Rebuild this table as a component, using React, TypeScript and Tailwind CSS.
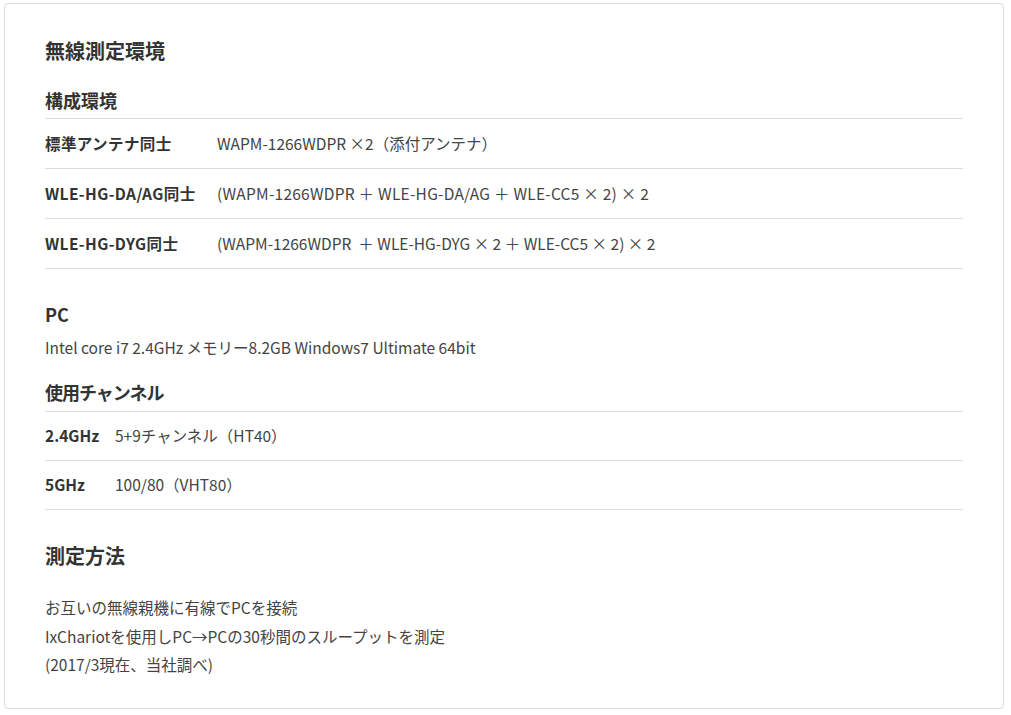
const font = { fontFamily: '"Noto Sans CJK JP", "Noto Sans", sans-serif' };

const antennaRows = [
  { label: "標準アンテナ同士", value: "WAPM-1266WDPR ×2（添付アンテナ）", wide: false },
  { label: "WLE-HG-DA/AG同士", value: "(WAPM-1266WDPR ＋ WLE-HG-DA/AG ＋ WLE-CC5 × 2) × 2", wide: true },
  { label: "WLE-HG-DYG同士", value: "(WAPM-1266WDPR  ＋ WLE-HG-DYG × 2 ＋ WLE-CC5 × 2) × 2", wide: false },
];

const channelRows = [
  { label: "2.4GHz", value: "5+9チャンネル（HT40）" },
  { label: "5GHz", value: "100/80（VHT80）" },
];

export default function App() {
  return (
    <div className="min-h-[715px] bg-white pl-[4px] pt-[3px] text-[#333]" style={font}>
      <div className="w-[1000px] h-[706px] border border-[#dcdcdc] rounded-[4px] px-[40px] pt-[32px]">
        {/* 無線測定環境 */}
        <h2 className="text-[20px] leading-[30px] font-bold text-[#333]">無線測定環境</h2>

        <h3 className="mt-[21px] pb-[4px] text-[18px] leading-[27px] font-bold">構成環境</h3>
        <table className="w-full border-collapse text-[15.5px]">
          <tbody>
            {antennaRows.map((r) => (
              <tr key={r.label} className="h-[50px] border-t border-b border-[#dcdcdc]">
                <th className="w-[172px] text-left font-bold align-middle p-0 tracking-[0.4px]">{r.label}</th>
                <td className={`align-middle p-0 text-[#444] whitespace-pre ${r.wide ? "tracking-[0.25px]" : ""}`}>
                  {r.value}
                </td>
              </tr>
            ))}
          </tbody>
        </table>

        {/* PC */}
        <h3 className="mt-[32px] text-[18px] leading-[27px] font-bold">PC</h3>
        <p className="mt-[7px] text-[15.5px] leading-[24px] text-[#444]">
          Intel core i7 2.4GHz メモリー8.2GB Windows7 Ultimate 64bit
        </p>

        <h3 className="mt-[20px] pb-[5px] text-[18px] leading-[27px] font-bold tracking-[-1px]">使用チャンネル</h3>
        <table className="w-full border-collapse text-[15.5px]">
          <tbody>
            {channelRows.map((r) => (
              <tr key={r.label} className="h-[49px] border-t border-b border-[#dcdcdc]">
                <th className="w-[70px] text-left font-bold align-middle p-0">{r.label}</th>
                <td className="align-middle p-0 text-[#444]">{r.value}</td>
              </tr>
            ))}
          </tbody>
        </table>

        {/* 測定方法 */}
        <h2 className="mt-[31px] text-[20px] leading-[30px] font-bold">測定方法</h2>
        <div className="mt-[22px] text-[15.5px] leading-[28.5px] text-[#444]">
          <p>お互いの無線親機に有線でPCを接続</p>
          <p>IxChariotを使用しPC→PCの30秒間のスループットを測定</p>
          <p>(2017/3現在、当社調べ)</p>
        </div>
      </div>
    </div>
  );
}
